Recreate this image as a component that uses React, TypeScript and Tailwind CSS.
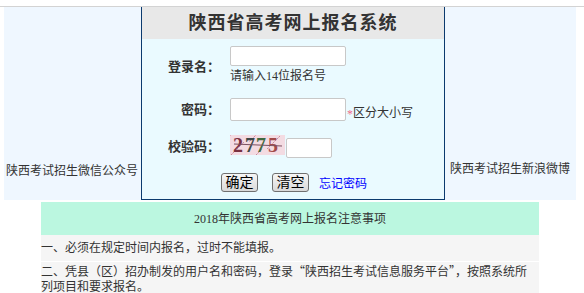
const font = "font-['Liberation_Serif','Noto_Sans_CJK_SC',serif]";

function Captcha() {
  return (
    <svg width="55" height="20" viewBox="0 0 55 20" className="block">
      <rect width="55" height="20" fill="#f3dbe2" />
      {[...Array(40)].map((_, i) => (
        <rect key={i} x={(i * 37) % 55} y={(i * 13) % 20} width="1" height="1" fill={i % 2 ? '#c98fa0' : '#e0b0c0'} />
      ))}
      <text x="3" y="17" fontSize="20" fontWeight="bold" fontFamily="Liberation Serif" fill="#7a3040">2</text>
      <text x="15" y="17" fontSize="20" fontWeight="bold" fontFamily="Liberation Serif" fill="#3d4848">7</text>
      <text x="26" y="17" fontSize="20" fontWeight="bold" fontFamily="Liberation Serif" fill="#3f6a40">7</text>
      <text x="38" y="17" fontSize="20" fontWeight="bold" fontFamily="Liberation Serif" fill="#a24a4a">5</text>
      <path d="M4 9 L52 11" stroke="#7a5060" strokeWidth="1" />
    </svg>
  );
}

function Btn({ children }: { children: string }) {
  return (
    <button className="h-[19px] w-[37px] rounded-[3px] border border-[#707070] bg-gradient-to-b from-[#f6f6f6] to-[#d9d9d9] text-[14px] leading-[17px] text-black">
      {children}
    </button>
  );
}

const cjk = "font-['Noto_Sans_CJK_SC',sans-serif] leading-[15px]";

export default function App() {
  return (
    <div className={`${font} w-[584px] h-[293px] overflow-hidden bg-white text-[12px] text-[#333]`}>
      <div className="h-[6px]" />
      <div className="border-t border-[#d3d3d3] flex pl-[4px]">
        <div className="w-[137px] h-[193px] bg-[#eff7ff] flex flex-col justify-end pb-[21px] pl-[2px] leading-[16px]">
          陕西考试招生微信公众号
        </div>

        <div className="w-[304px] h-[193px] border-x border-b border-[#0b3a6e] bg-[#eafaff]">
          <div className="h-[32px] bg-[#e8e8e8] flex items-center justify-center text-[18px] font-bold tracking-[1px] text-[#333] leading-[32px]">
            陕西省高考网上报名系统
          </div>

          <div className="pt-[7px]">
            <div className="flex items-center">
              <div className="w-[78px] text-right font-bold text-[13px] pt-[3px]">登录名：</div>
              <div className="ml-[10px] flex flex-col">
                <input className="w-[116px] h-[20px] bg-white border border-[#c8c8c8] rounded-[2px] outline-none" />
                <span className="leading-[18px] pt-[1px]">请输入14位报名号</span>
              </div>
            </div>

            <div className="flex items-center mt-[13px]">
              <div className="w-[78px] text-right font-bold text-[13px]">密码：</div>
              <input type="password" className="ml-[10px] w-[116px] h-[23px] bg-white border border-[#c8c8c8] rounded-[2px] outline-none" />
              <span className="self-end text-[#f06a8a] leading-[14px] ml-[1px]">*</span>
              <span className="self-end leading-[16px]">区分大小写</span>
            </div>

            <div className="flex items-center mt-[14px]">
              <div className="w-[78px] text-right font-bold text-[13px]">校验码：</div>
              <div className="ml-[10px] flex items-start h-[23px]">
                <Captcha />
                <input className="ml-[1px] mt-[3px] w-[46px] h-[20px] bg-white border border-[#c8c8c8] rounded-[2px] outline-none" />
              </div>
            </div>

            <div className="flex items-end mt-[15px] pl-[79px]">
              <Btn>确定</Btn>
              <div className="ml-[14px]">
                <Btn>清空</Btn>
              </div>
              <a className="ml-[10px] text-[#0000ff] leading-[16px]">忘记密码</a>
            </div>
          </div>
        </div>

        <div className="w-[131px] h-[193px] bg-[#eff7ff] flex flex-col justify-end pb-[23px] pl-[5px] leading-[16px]">
          陕西考试招生新浪微博
        </div>
      </div>

      <div className="ml-[41px] mt-[2px] w-[498px]">
        <div className="h-[33px] bg-[#bbf7e0] flex items-center justify-center leading-[16px]">
          2018年陕西省高考网上报名注意事项
        </div>
        <div className="bg-[#f5f5f5] h-[26px] flex items-center leading-[15px]">
          一、必须在规定时间内报名，过时不能填报。
        </div>
        <div className="bg-[#f5f5f5] mt-px pt-[1px] leading-[15px]">
          二、凭县（区）招办制发的用户名和密码，登录<span className={cjk}>“</span>陕西招生考试信息服务平台<span className={cjk}>”</span>，按照系统所列项目和要求报名。
        </div>
      </div>
    </div>
  );
}
